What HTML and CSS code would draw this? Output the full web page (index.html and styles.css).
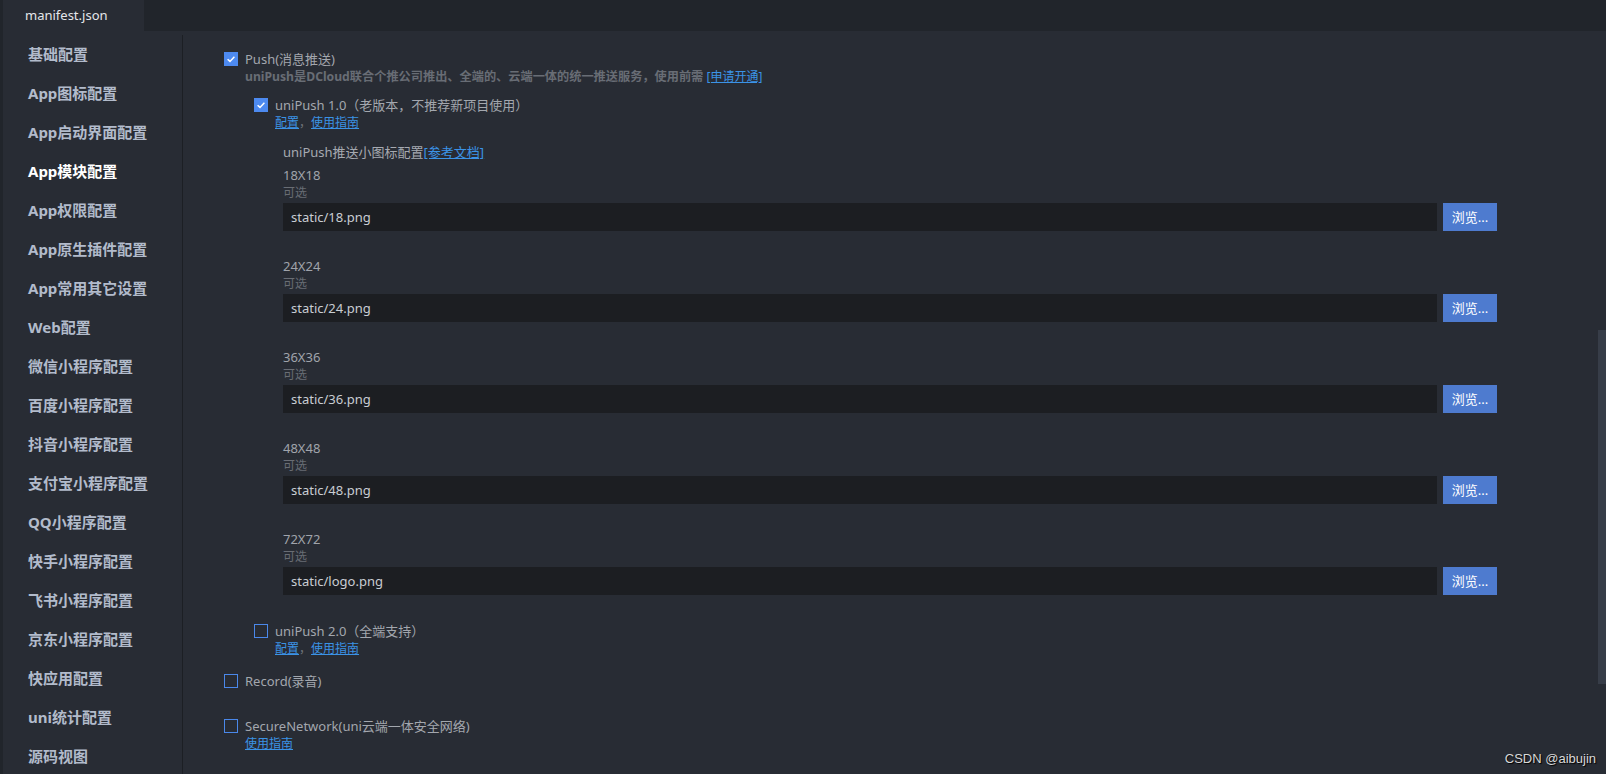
FILE: index.html
```html
<!DOCTYPE html>
<html lang="zh-CN">
<head>
<meta charset="utf-8">
<title>manifest.json</title>
<link rel="stylesheet" href="styles.css">
</head>
<body>
<div class="window">
  <div class="tabbar">
    <div class="tab">manifest.json</div>
  </div>
  <div class="main">
    <nav class="sidebar">
      <div class="nav-item">基础配置</div>
      <div class="nav-item">App图标配置</div>
      <div class="nav-item">App启动界面配置</div>
      <div class="nav-item active">App模块配置</div>
      <div class="nav-item">App权限配置</div>
      <div class="nav-item">App原生插件配置</div>
      <div class="nav-item">App常用其它设置</div>
      <div class="nav-item">Web配置</div>
      <div class="nav-item">微信小程序配置</div>
      <div class="nav-item">百度小程序配置</div>
      <div class="nav-item">抖音小程序配置</div>
      <div class="nav-item">支付宝小程序配置</div>
      <div class="nav-item">QQ小程序配置</div>
      <div class="nav-item">快手小程序配置</div>
      <div class="nav-item">飞书小程序配置</div>
      <div class="nav-item">京东小程序配置</div>
      <div class="nav-item">快应用配置</div>
      <div class="nav-item">uni统计配置</div>
      <div class="nav-item">源码视图</div>
    </nav>
    <div class="divider"></div>
    <div class="content">
      <div class="opt">
        <span class="cb checked"><svg viewBox="0 0 14 14" width="14" height="14"><path d="M3.6 7.2 L6 9.4 L10.4 4.8" fill="none" stroke="#fff" stroke-width="1.5"/></svg></span>
        <span class="opt-label">Push(消息推送)</span>
      </div>
      <div class="sub desc">uniPush是DCloud联合个推公司推出、全端的、云端一体的统一推送服务，使用前需 <a class="link">[申请开通]</a></div>

      <div class="level2">
        <div class="opt">
          <span class="cb checked"><svg viewBox="0 0 14 14" width="14" height="14"><path d="M3.6 7.2 L6 9.4 L10.4 4.8" fill="none" stroke="#fff" stroke-width="1.5"/></svg></span>
          <span class="opt-label">uniPush 1.0（老版本，不推荐新项目使用）</span>
        </div>
        <div class="sub links"><a class="link">配置</a>，<a class="link">使用指南</a></div>
      </div>

      <div class="icons">
        <div class="icons-title">uniPush推送小图标配置<a class="link big">[参考文档]</a></div>

        <div class="group first">
          <div class="g-label">18X18</div>
          <div class="g-hint">可选</div>
          <div class="field"><div class="input">static/18.png</div><div class="btn">浏览...</div></div>
        </div>
        <div class="group">
          <div class="g-label">24X24</div>
          <div class="g-hint">可选</div>
          <div class="field"><div class="input">static/24.png</div><div class="btn">浏览...</div></div>
        </div>
        <div class="group">
          <div class="g-label">36X36</div>
          <div class="g-hint">可选</div>
          <div class="field"><div class="input">static/36.png</div><div class="btn">浏览...</div></div>
        </div>
        <div class="group">
          <div class="g-label">48X48</div>
          <div class="g-hint">可选</div>
          <div class="field"><div class="input">static/48.png</div><div class="btn">浏览...</div></div>
        </div>
        <div class="group">
          <div class="g-label">72X72</div>
          <div class="g-hint">可选</div>
          <div class="field"><div class="input">static/logo.png</div><div class="btn">浏览...</div></div>
        </div>
      </div>

      <div class="level2 push2">
        <div class="opt">
          <span class="cb"></span>
          <span class="opt-label">uniPush 2.0（全端支持）</span>
        </div>
        <div class="sub links"><a class="link">配置</a>，<a class="link">使用指南</a></div>
      </div>

      <div class="opt record">
        <span class="cb"></span>
        <span class="opt-label">Record(录音)</span>
      </div>

      <div class="opt secure">
        <span class="cb"></span>
        <span class="opt-label">SecureNetwork(uni云端一体安全网络)</span>
      </div>
      <div class="sub links"><a class="link">使用指南</a></div>
    </div>
    <div class="scrolltrack"><div class="thumb"></div></div>
  </div>
  <div class="watermark">CSDN @aibujin</div>
</div>
</body>
</html>
```
FILE: styles.css
```css
html, body {
  margin: 0;
  padding: 0;
}
body {
  background: #282c34;
  font-family: "Noto Sans", "Noto Sans CJK SC", sans-serif;
  overflow: hidden;
}
.window {
  position: relative;
  width: 1603px;
  height: 774px;
  border-left: 3px solid #21252b;
  background: #282c34;
  overflow: hidden;
}
.tabbar {
  height: 31px;
  background: #21252b;
  display: flex;
}
.tab {
  width: 119px;
  padding-left: 22px;
  background: #282c34;
  color: #e4e6ea;
  font-size: 13px;
  line-height: 30px;
}
.main {
  display: flex;
  height: 743px;
}
.sidebar {
  width: 179px;
  flex: none;
  padding-top: 4px;
}
.nav-item {
  padding-left: 25px;
  height: 39px;
  line-height: 39px;
  font-size: 15px;
  font-weight: 700;
  color: #b2bbcb;
  white-space: nowrap;
}
.nav-item.active {
  color: #ffffff;
}
.divider {
  width: 1px;
  flex: none;
  margin-top: 4px;
  background: #1c1f24;
}
.content {
  flex: 1;
  padding-top: 19px;
  padding-left: 41px;
  color: #a3a7ae;
  font-size: 13px;
}
.opt {
  display: flex;
  align-items: center;
  height: 18px;
  line-height: 18px;
  white-space: nowrap;
}
.cb {
  width: 14px;
  height: 14px;
  box-sizing: border-box;
  border: 1.5px solid #4a88ea;
  margin-right: 7px;
  flex: none;
  display: flex;
}
.cb.checked {
  border: none;
  background: #4d8af0;
}
.opt-label {
  color: #a3a7ae;
}
.sub {
  padding-left: 21px;
  line-height: 18px;
  height: 18px;
  white-space: nowrap;
}
.desc {
  font-weight: 700;
  color: #686d75;
  font-size: 12.2px;
}
.links {
  font-size: 12px;
  color: #6f737a;
}
.link {
  color: #3b93e6;
  text-decoration: underline;
  font-weight: 400;
  font-size: 12px;
}
.link.big {
  font-size: 13px;
}
.level2 {
  margin-left: 30px;
  margin-top: 10px;
}
.icons {
  margin-left: 59px;
  margin-top: 11px;
}
.icons-title {
  line-height: 18px;
  color: #a6aab1;
}
.group {
  margin-top: 26px;
}
.group.first {
  margin-top: 5px;
}
.g-label {
  line-height: 18px;
  color: #a0a4ab;
}
.g-hint {
  line-height: 18px;
  font-size: 12px;
  color: #696d74;
}
.field {
  display: flex;
  gap: 6px;
  margin-top: 1px;
}
.input {
  width: 1146px;
  height: 28px;
  line-height: 28px;
  padding-left: 8px;
  background: #1c1e22;
  color: #c9cdd3;
  font-size: 13px;
}
.btn {
  width: 54px;
  height: 28px;
  line-height: 28px;
  text-align: center;
  background: #4e7bcf;
  color: #ffffff;
  font-size: 13px;
}
.push2 {
  margin-top: 27px;
}
.record {
  margin-top: 14px;
}
.secure {
  margin-top: 27px;
}
.scrolltrack {
  width: 8px;
  flex: none;
}
.thumb {
  margin-top: 299px;
  height: 354px;
  background: #373d48;
}
.watermark {
  position: absolute;
  right: 10px;
  bottom: 8px;
  font-family: "Liberation Sans", sans-serif;
  font-size: 13px;
  color: #d8d8d8;
  text-shadow: 1px 1px 1px #000;
}
```
